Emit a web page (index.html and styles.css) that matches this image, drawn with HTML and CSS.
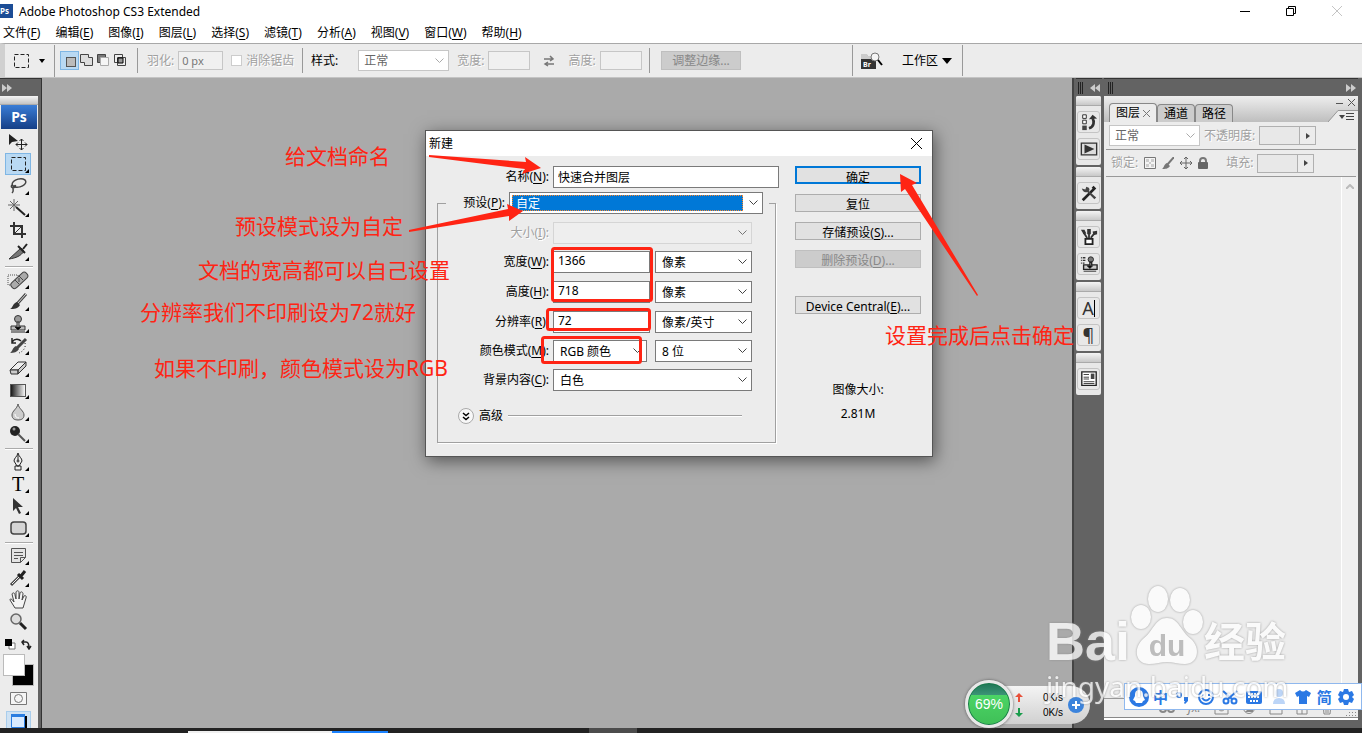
FILE: index.html
```html
<!DOCTYPE html>
<html lang="zh-CN">
<head>
  <meta charset="UTF-8" />
  <meta name="viewport" content="width=device-width, initial-scale=1.0"/>
  <title>Adobe Photoshop CS3 Extended</title>
  <link rel="stylesheet" href="styles.css">
</head>
<body>

  <header class="titlebar">
    <span class="app-icon">Ps</span>
    <h1>Adobe Photoshop CS3 Extended</h1>
    <div class="window-buttons">
      <button type="button" aria-label="最小化"><svg width="12" height="12"><path d="M1 6.500h10" stroke="#000"/></svg></button>
      <button type="button" aria-label="还原"><svg width="12" height="12" fill="none" stroke="#000"><path d="M1.500 3.500h7v7h-7zM3.500 3.500v-2h7v7h-2"/></svg></button>
      <button type="button" aria-label="关闭"><svg width="12" height="12" stroke="#c4c4c4"><path d="M1 1l10 10M11 1L1 11"/></svg></button>
    </div>
  </header>

  <nav class="menubar">
    <a href="#">文件(<u>F</u>)</a>
    <a href="#">编辑(<u>E</u>)</a>
    <a href="#">图像(<u>I</u>)</a>
    <a href="#">图层(<u>L</u>)</a>
    <a href="#">选择(<u>S</u>)</a>
    <a href="#">滤镜(<u>T</u>)</a>
    <a href="#">分析(<u>A</u>)</a>
    <a href="#">视图(<u>V</u>)</a>
    <a href="#">窗口(<u>W</u>)</a>
    <a href="#">帮助(<u>H</u>)</a>
  </nav>

  <div class="options">
    <div class="options-tool">
      <svg width="18" height="16"><rect x="1.500" y="1.500" width="14" height="13" fill="none" stroke="#222" stroke-dasharray="4 2"/></svg>
      <svg width="6" height="4"><path d="M0 0h6L3 4z"/></svg>
    </div>
    <div class="options-modes">
      <button type="button" class="mode on" aria-label="新选区"><svg width="16" height="16"><rect x="4.500" y="4.500" width="9" height="9" fill="#bbb" stroke="#555"/></svg></button>
      <button type="button" class="mode" aria-label="添加到选区"><svg width="16" height="16" fill="#ddd" stroke="#444"><path d="M1.500 1.500h8v3h4v8h-8v-3h-4z"/></svg></button>
      <button type="button" class="mode" aria-label="从选区减去"><svg width="16" height="16" stroke="#444"><path d="M1.500 1.500h8v3h-5v5h-3z" fill="#777"/><path d="M4.500 4.500h8v8h-8z" fill="#f5f5f5" stroke="#aaa"/></svg></button>
      <button type="button" class="mode" aria-label="与选区交叉"><svg width="16" height="16" stroke="#444"><path d="M1.500 1.500h8v8h-8zM4.500 4.500h8v8h-8z" fill="#eee"/><path d="M5 5h5v5H5z" fill="#999" stroke="#000"/></svg></button>
    </div>
    <div class="options-group">
      <label class="dim" for="feather">羽化:</label>
      <input class="opt-input feather" id="feather" type="text" value="0 px" disabled>
      <input class="opt-check" id="antialias" type="checkbox" disabled>
      <label class="dim" for="antialias">消除锯齿</label>
    </div>
    <div class="options-group style-group">
      <label class="style-label" for="style">样式:</label>
      <select class="opt-select" id="style" disabled><option>正常</option></select>
      <label class="dim" for="optW">宽度:</label>
      <input class="opt-input" id="optW" type="text" disabled>
      <svg class="swap" width="12" height="12" fill="none" stroke="#777" stroke-width="1.500"><path d="M1 4h9M7 1l3 3-3 2M11 9H2M5 7L2 9l3 2"/></svg>
      <label class="dim" for="optH">高度:</label>
      <input class="opt-input" id="optH" type="text" disabled>
    </div>
    <div class="options-refine">
      <button type="button" class="refine" disabled>调整边缘...</button>
    </div>
    <div class="options-work">
      <svg width="24" height="20"><path d="M1 4h6l1 2h8v12H1z" fill="#333"/><path d="M1 3h6l1 2h8v3H1z" fill="#ccc"/><text x="3" y="16" font-size="7" font-weight="bold" fill="#fff">Br</text><circle cx="15" cy="6" r="4" fill="#f5f5f5" stroke="#777"/><path d="M18 9l4 5" stroke="#000" stroke-width="2"/></svg>
      <button type="button" class="workspace-btn">工作区 <svg width="10" height="6"><path d="M0 0h10L5 6z"/></svg></button>
    </div>
  </div>

  <main class="workspace">

    <aside class="toolbox">
      <div class="dark-head"><svg width="10" height="8" fill="#ccc"><path d="M0 0l5 4-5 4zM5 0l5 4-5 4z"/></svg></div>
      <div class="tools">
        <div class="grip"></div>
        <div class="ps-logo">Ps</div>
        <div class="tool-group">
          <button type="button" aria-label="移动"><svg viewBox="0 0 24 20"><path d="M3 2v11l3-3 6-1z" fill="#222"/><path d="M15.500 7v11M10 12.500h11M13.500 9l2-2 2 2M13.500 16l2 2 2-2M12 10.500l-2 2 2 2M19 10.500l2 2-2 2" fill="none" stroke="#222"/></svg></button>
          <button type="button" class="on more" aria-label="矩形选框"><svg viewBox="0 0 24 20"><rect x="5.500" y="3.500" width="14" height="13" fill="none" stroke="#222" stroke-dasharray="4 2"/></svg></button>
          <button type="button" class="more" aria-label="套索"><svg viewBox="0 0 24 20" fill="none" stroke="#444" stroke-width="1.500"><ellipse cx="13" cy="7" rx="7" ry="4" transform="rotate(-15 13 7)"/><path d="M6 9c-2 2 1 4 3 2s-2-2-2 1 1 3-1 5"/></svg></button>
          <button type="button" class="more" aria-label="魔棒"><svg viewBox="0 0 24 20" fill="none"><path d="M8 1v12M2 7h12M4 3l8 8M12 3l-8 8" stroke="#666"/><path d="M10 9l9 8" stroke="#222" stroke-width="2"/></svg></button>
          <button type="button" aria-label="裁剪"><svg viewBox="0 0 24 20" fill="none" stroke="#333" stroke-width="2"><path d="M8 2v12h12M4 6h12v12"/><path d="M9 13l7-7" stroke-width="1"/></svg></button>
          <button type="button" class="more" aria-label="切片"><svg viewBox="0 0 24 20"><path d="M3 17L15 6l3 3c-3 5-8 7-15 8z" fill="#777" stroke="#333"/><path d="M12 4l7 7M17 7l4-5" stroke="#222" stroke-width="2"/></svg></button>
        </div>
        <div class="tool-group">
          <button type="button" class="more" aria-label="修复画笔"><svg viewBox="0 0 24 20"><rect x="2" y="5" width="10" height="10" fill="none" stroke="#555" stroke-dasharray="1 1"/><rect x="3" y="7" width="20" height="7" rx="3" fill="#aaa" stroke="#444" transform="rotate(-43 13 10)"/><path d="M9 10l4 4M13 6l4 4M12 9h2M12 11h2" stroke="#444"/></svg></button>
          <button type="button" class="more" aria-label="画笔"><svg viewBox="0 0 24 20"><path d="M20 2l-9 10" stroke="#444" stroke-width="3"/><path d="M20 2l-9 10" stroke="#ddd"/><path d="M11 10l3 3c-2 4-6 4-10 4 3-1 2-5 7-7z" fill="#333"/></svg></button>
          <button type="button" class="more" aria-label="仿制图章"><svg viewBox="0 0 24 20"><circle cx="12" cy="5" r="3.500" fill="#999" stroke="#333"/><path d="M11 8h2v4h6v4H5v-4h6z" fill="#bbb" stroke="#333"/><path d="M9 13h6l-3 3zM5 18h14" stroke="#222"/></svg></button>
          <button type="button" class="more" aria-label="历史画笔"><svg viewBox="0 0 24 20"><path d="M20 3L10 13" stroke="#444" stroke-width="3"/><path d="M10 10l3 3c-2 3-5 4-9 4 3-2 2-5 6-7z" fill="#444"/><path d="M6 6c3-4 7-3 9-1M6 2v5h4" fill="none" stroke="#222" stroke-width="1.500"/><path d="M19 7c1 4-1 8-6 10" fill="none" stroke="#222" stroke-dasharray="1 2"/></svg></button>
          <button type="button" class="more" aria-label="橡皮擦"><svg viewBox="0 0 24 20" stroke="#333"><path d="M4 12l8-8h8l-8 8z" fill="#eee"/><path d="M4 12h8v4H5zM12 12l8-8v4l-8 8z" fill="#ccc"/></svg></button>
          <button type="button" class="more" aria-label="渐变"><svg viewBox="0 0 24 20"><defs><linearGradient id="ramp"><stop stop-color="#111"/><stop offset="1" stop-color="#fff"/></linearGradient></defs><rect x="4.500" y="4.500" width="15" height="12" fill="url(#ramp)" stroke="#555"/></svg></button>
          <button type="button" class="more" aria-label="模糊"><svg viewBox="0 0 24 20"><path d="M12 2c1 5 6 7 6 11s-3 5-6 5-6-1-6-5 5-6 6-11z" fill="#ccc" stroke="#555"/><path d="M9 12c0 3 2 4 4 4" stroke="#fff" fill="none"/></svg></button>
          <button type="button" class="more" aria-label="减淡"><svg viewBox="0 0 24 20"><circle cx="9" cy="7" r="5" fill="#222"/><circle cx="8" cy="5" r="1.500" fill="#999"/><path d="M12 10l7 7" stroke="#555" stroke-width="2"/></svg></button>
        </div>
        <div class="tool-group">
          <button type="button" class="more" aria-label="钢笔"><svg viewBox="0 0 24 20" fill="#eee" stroke="#222"><path d="M12 1c1 4 4 5 4 8l-3 5h-2l-3-5c0-3 3-4 4-8zM12 3v6M9 14h6v4H9z"/><circle cx="12" cy="9" r="1"/></svg></button>
          <button type="button" class="more type-tool" aria-label="文字">T</button>
          <button type="button" class="more" aria-label="路径选择"><svg viewBox="0 0 24 20"><path d="M7 2v13l3-3 3 6 2-1-3-6h5z" fill="#333"/></svg></button>
          <button type="button" class="more" aria-label="圆角矩形"><svg viewBox="0 0 24 20"><rect x="5" y="4" width="15" height="12" rx="3" fill="#d5d5d5" stroke="#444" stroke-width="1.500"/></svg></button>
        </div>
        <div class="tool-group">
          <button type="button" class="more" aria-label="注释"><svg viewBox="0 0 24 20" fill="#e4e4e4" stroke="#555"><path d="M5.500 2.500h14v9l-5 5h-9zM14.500 16.500v-5h5M8 6.500h9M8 9.500h9M8 12.500h4"/></svg></button>
          <button type="button" class="more" aria-label="吸管"><svg viewBox="0 0 24 20"><path d="M5 17l9-9" stroke="#444" stroke-width="3"/><path d="M6 16l8-8" stroke="#eee"/><path d="M12 6l5 5M15 8l4-5" stroke="#222" stroke-width="3"/></svg></button>
          <button type="button" aria-label="抓手"><svg viewBox="0 0 24 20"><path d="M9 18l-5-8c0-2 2-1 4 2L6 4c1-2 3-1 3 1l1 4V2c1-2 3-1 3 0v7l1-6c1-2 3-1 3 1l-1 6 2-4c1-1 3 0 2 2l-3 10z" fill="#f4f4f4" stroke="#444"/></svg></button>
          <button type="button" aria-label="缩放"><svg viewBox="0 0 24 20"><circle cx="10" cy="7" r="5" fill="#ddd" stroke="#666" stroke-width="1.500"/><path d="M14 11l6 6" stroke="#222" stroke-width="3"/></svg></button>
        </div>
        <div class="swatch-mini">
          <svg width="11" height="11"><path d="M4 4h6v6H4z" fill="#fff" stroke="#777"/><path d="M0 0h7v7H0z"/></svg>
          <svg width="11" height="11" fill="none" stroke="#222" stroke-width="1.500"><path d="M3 1L1 3l2 3M1 3h4q3 0 3 6M6 7l2 3 2-3"/></svg>
        </div>
        <div class="swatches"><i class="back"></i><i class="front"></i></div>
        <button type="button" class="mask-btn" aria-label="快速蒙版"><svg width="17" height="13" fill="#f5f5f5" stroke="#777"><path d="M.500.500h16v12H.500z"/><circle cx="8.500" cy="6.500" r="4"/></svg></button>
        <button type="button" class="screen-btn" aria-label="屏幕模式"><svg width="16" height="14"><path d="M2 2h14v12H2z" fill="#000"/><path d="M.500.500h13v13H.500z" fill="#d9ebff" stroke="#2a7de0"/><path d="M0 0h14v3H0z" fill="#2a7de0"/></svg></button>
      </div>
    </aside>

    <section class="canvas">
      <form class="dialog">
        <div class="dialog-title">
          <h2>新建</h2>
          <button type="button" aria-label="关闭"><svg width="11" height="11" stroke="#000"><path d="M0 0l11 11M11 0L0 11"/></svg></button>
        </div>
        <div class="dialog-body">
          <div class="dialog-left">
            <div class="name-row">
              <label for="docName">名称(<u>N</u>):</label>
              <input class="field" id="docName" type="text" value="快速合并图层">
            </div>
            <fieldset>
              <legend>
                <label for="preset">预设(<u>P</u>):</label>
                <span class="preset-box"><select class="field preset" id="preset"><option>自定</option></select></span>
              </legend>
              <div class="row first">
                <label class="dim" for="size">大小(<u>I</u>):</label>
                <select class="field wide" id="size" disabled><option></option></select>
              </div>
              <div class="row">
                <label for="width">宽度(<u>W</u>):</label>
                <input class="field" id="width" type="text" value="1366">
                <select class="field" aria-label="宽度单位"><option>像素</option></select>
              </div>
              <div class="row measure">
                <label for="height">高度(<u>H</u>):</label>
                <input class="field" id="height" type="text" value="718">
                <select class="field" aria-label="高度单位"><option>像素</option></select>
              </div>
              <div class="row measure">
                <label for="res">分辨率(<u>R</u>):</label>
                <input class="field" id="res" type="text" value="72">
                <select class="field" aria-label="分辨率单位"><option>像素/英寸</option></select>
              </div>
              <div class="row">
                <label for="mode">颜色模式(<u>M</u>):</label>
                <select class="field mode-select" id="mode"><option>RGB 颜色</option></select>
                <select class="field" aria-label="位深度"><option>8 位</option></select>
              </div>
              <div class="row">
                <label for="bg">背景内容(<u>C</u>):</label>
                <select class="field wide" id="bg"><option>白色</option></select>
              </div>
              <div class="advanced">
                <button type="button" aria-label="展开高级选项"><svg width="8" height="9" fill="none" stroke="#000" stroke-width="1.500"><path d="M1 1l3 2.500L7 1M1 5l3 2.500L7 5"/></svg></button>
                <span>高级</span>
                <hr>
              </div>
            </fieldset>
          </div>
          <div class="dialog-right">
            <button type="button" class="btn primary">确定</button>
            <button type="button" class="btn">复位</button>
            <button type="button" class="btn">存储预设(<u>S</u>)...</button>
            <button type="button" class="btn" disabled>删除预设(<u>D</u>)...</button>
            <button type="button" class="btn device">Device Central(<u>E</u>)...</button>
            <p class="image-size">图像大小:<br>2.81M</p>
          </div>
        </div>
      </form>

      <!-- tutorial notes over the dialog -->
      <svg class="marks" viewBox="42 78 1030 650" width="1030" height="650">
        <g fill="#ff2414">
          <path d="M429 155L526 162 525 157 541 168 522 174 525 169 429 157z"/>
          <path d="M409 230L508 209 507 204 523 211 509 221 509 216 409 232z"/>
          <path d="M978 295L912 185 917 183 900 174 901 192 905 189 977 296z"/>
        </g>
        <g fill="none" stroke="#ff2414" stroke-width="3">
          <rect x="552.500" y="248.500" width="99" height="52" rx="2"/>
          <rect x="547.500" y="309.500" width="102" height="20" rx="2"/>
          <rect x="542.500" y="337.500" width="98" height="25" rx="2"/>
        </g>
      </svg>
      <p class="note note-name">给文档命名</p>
      <p class="note note-preset">预设模式设为自定</p>
      <p class="note note-size">文档的宽高都可以自己设置</p>
      <p class="note note-res">分辨率我们不印刷设为72就好</p>
      <p class="note note-mode">如果不印刷，颜色模式设为RGB</p>
      <p class="note note-ok">设置完成后点击确定</p>
    </section>

    <aside class="dock">
      <div class="dark-head">
        <svg width="6" height="12" stroke="#222"><path d="M.500 0v12M2.500 0v12M4.500 0v12"/></svg>
        <svg width="10" height="8" fill="#ccc"><path d="M5 0L0 4l5 4zM10 0L5 4l5 4z"/></svg>
      </div>
      <div class="dock-group">
        <button type="button" aria-label="历史记录"><svg viewBox="0 0 20 20"><path d="M3 2h4v4H3zM3 8h4v4H3z" fill="#fff" stroke="#222"/><path d="M2.500 14h5v5h-5z" fill="#444"/><path d="M10 17c6-2 6-8 4-11" fill="none" stroke="#333" stroke-width="3"/><path d="M10 7l4-5 5 4z" fill="#333"/></svg></button>
        <button type="button" aria-label="动作"><svg viewBox="0 0 20 20"><path d="M1.500 3.500h17v13h-17z" fill="#ddd" stroke="#333" stroke-width="1.500"/><path d="M5 5v10l11-5z" fill="#333"/></svg></button>
      </div>
      <div class="dock-group">
        <button type="button" aria-label="工具预设"><svg viewBox="0 0 20 20"><path d="M3 18L17 4M14 3l3 3" stroke="#222" stroke-width="3"/><path d="M2 5l4 1 1-3c4 1 4 3 3 5l8 7-2 2-8-8c-3 1-5-1-6-4z" fill="#444"/></svg></button>
      </div>
      <div class="dock-group">
        <button type="button" aria-label="画笔面板"><svg viewBox="0 0 20 20"><path d="M6 12h8v6H6z" fill="#fff" stroke="#222" stroke-width="2"/><path d="M10 11V5M8 11L4 5M12 11l4-5" stroke="#333" stroke-width="2"/><path d="M8 1h4v6H8zM1 2h4l2 4-3 1zM14 4l5-1v4l-4 1z" fill="#333"/></svg></button>
        <button type="button" aria-label="仿制源"><svg viewBox="0 0 20 20"><path d="M1 3h5M1 6h5M1 9h4" stroke="#333" stroke-width="1.500" stroke-dasharray="1 1 4"/><circle cx="12" cy="5" r="3" fill="#777" stroke="#222"/><path d="M11 8h2v3h6v5H4v-5h7z" fill="#ccc" stroke="#222" stroke-width="1.500"/><path d="M8 12h6l-3 3zM4 18h14" stroke="#222"/></svg></button>
      </div>
      <div class="dock-group">
        <button type="button" class="char-btn" aria-label="字符">A</button>
        <button type="button" class="para-btn" aria-label="段落">¶</button>
      </div>
      <div class="dock-group">
        <button type="button" aria-label="图层复合"><svg viewBox="0 0 20 20"><path d="M2 2h16v15H2z" fill="#fff" stroke="#222" stroke-width="1.500"/><path d="M4 5h6M4 8h6M4 10h6M4 13h12M4 15h12" stroke="#333"/><path d="M12 4h4v6h-4z" fill="#444"/></svg></button>
      </div>
    </aside>

    <aside class="panel-dock">
      <div class="dark-head">
        <svg width="6" height="12" stroke="#222"><path d="M.500 0v12M2.500 0v12M4.500 0v12"/></svg>
        <svg width="10" height="8" fill="#ccc"><path d="M0 0l5 4-5 4zM5 0l5 4-5 4z"/></svg>
      </div>
      <div class="panel">
        <div class="tabs">
          <button type="button" class="tab active">图层 <svg width="7" height="7" stroke="#777"><path d="M0 0l7 7M7 0L0 7"/></svg></button>
          <button type="button" class="tab">通道</button>
          <button type="button" class="tab">路径</button>
          <div class="panel-corner">
            <svg width="22" height="9" stroke="#555"><path d="M0 5.500h7M12 1l7 7M19 1l-7 7"/></svg>
            <svg width="30" height="12"><path d="M0 12L10 1h20v11z" fill="#ececec"/><path d="M0 12L10 .500h20" fill="none" stroke="#999"/><path d="M11 5h6l-3 4z" fill="#444"/><path d="M18 3.500h8M18 6.500h8M18 9.500h8" stroke="#444"/></svg>
          </div>
        </div>
        <div class="panel-row">
          <select class="blend" aria-label="混合模式" disabled><option>正常</option></select>
          <label class="dim" for="opacity">不透明度:</label>
          <span class="slider-box"><input id="opacity" type="text" disabled><button type="button" aria-label="调整不透明度" disabled><svg width="4" height="6"><path d="M0 0l4 3-4 3z" fill="#444"/></svg></button></span>
        </div>
        <div class="panel-row lock-row">
          <span class="dim">锁定:</span>
          <div class="locks">
            <svg width="12" height="12"><path d="M.500.500h11v11H.500z" fill="#f4f4f4" stroke="#777"/><path d="M2 2h3v3H2zM7 2h3v3H7zM5 5h2v2H5zM2 7h3v3H2zM7 7h3v3H7z" fill="#ccc"/></svg>
            <svg width="12" height="12"><path d="M12 0L5 8" stroke="#777" stroke-width="2"/><path d="M5 6l3 3c-2 3-5 3-8 3 2-1 2-5 5-6z" fill="#777"/></svg>
            <svg width="12" height="12" fill="none" stroke="#666"><path d="M6 0v12M0 6h12M4 2l2-2 2 2M4 10l2 2 2-2M2 4L0 6l2 2M10 4l2 2-2 2"/></svg>
            <svg width="10" height="12"><path d="M2 6V4q0-3 3-3t3 3v2" fill="none" stroke="#777" stroke-width="2"/><rect y="5" width="10" height="7" rx="1" fill="#666"/></svg>
          </div>
          <label class="dim" for="fill">填充:</label>
          <span class="slider-box"><input id="fill" type="text" disabled><button type="button" aria-label="调整填充" disabled><svg width="4" height="6"><path d="M0 0l4 3-4 3z" fill="#444"/></svg></button></span>
        </div>
        <div class="layer-list">
          <div class="scroll"><svg width="8" height="5" fill="none" stroke="#bbb" stroke-width="2"><path d="M0 5l4-4 4 4"/></svg></div>
        </div>
        <div class="panel-foot">
          <svg width="16" height="14" fill="none" stroke="#888" stroke-width="2"><circle cx="4" cy="8" r="3"/><circle cx="12" cy="8" r="3"/></svg>
          <em>fx.</em>
          <svg width="15" height="14"><path d="M1 2h13v11H1z" fill="#eee" stroke="#888"/><circle cx="7.500" cy="7.500" r="3" fill="#aaa"/></svg>
          <svg width="14" height="14"><circle cx="7" cy="7" r="5.500" fill="#eee" stroke="#888"/><path d="M3 11L11 3v8z" fill="#888"/></svg>
          <svg width="14" height="14"><path d="M1 2h5l2 2h5v9H1z" fill="#eee" stroke="#888"/></svg>
          <svg width="12" height="14"><path d="M1 2h10v11H1zM1 8h5v5" fill="#eee" stroke="#888"/></svg>
          <svg width="12" height="14" fill="none" stroke="#888"><path d="M1 3h10M2 3l1 10h6l1-10M5 5v7M7 5v7"/></svg>
          <svg class="resize" width="10" height="10" stroke="#888" stroke-dasharray="1 2"><path d="M0 9.500h10M3 6.500h7M6 3.500h4M9 .500h1"/></svg>
        </div>
      </div>
    </aside>
  </main>

  <footer class="taskbar"><span class="task-light"></span><span class="task-blue"></span><span class="task-grey"></span></footer>

  <div class="speed">
    <div class="speed-pill">
      <div class="speed-rates">
        <svg width="8" height="9" fill="#e8503a"><path d="M4 0l4 4H5v5H3V4H0z"/></svg><span>0K/s</span>
        <svg width="8" height="9" fill="#1a9c4c"><path d="M4 9L0 5h3V0h2v5h3z"/></svg><span>0K/s</span>
      </div>
      <button type="button" aria-label="加速"><svg width="16" height="16"><circle cx="8" cy="8" r="8" fill="#3b83dc"/><path d="M8 4v8M4 8h8" stroke="#fff" stroke-width="2"/></svg></button>
    </div>
    <div class="speed-ball">69%</div>
  </div>

  <div class="ime">
    <svg viewBox="0 0 20 20"><circle cx="10" cy="10" r="10"/><path d="M10 3c4 0 4 4 4 6l2 4-2 1-1 2H7l-1-2-2-1 2-4c0-2 0-6 4-6z" fill="#fff"/></svg>
    <span>中</span>
    <svg viewBox="0 0 20 20"><circle cx="7" cy="8" r="2" fill="none" stroke="#2a78e4" stroke-width="2"/><path d="M12 10h4v4l-3 3-1-1 1-2h-1z"/></svg>
    <svg viewBox="0 0 20 20" fill="none" stroke="#2a78e4" stroke-width="2"><circle cx="10" cy="10" r="7"/><path d="M6 11q4 5 8 0M7 7v2M13 7v2"/></svg>
    <svg viewBox="0 0 20 20" fill="none" stroke="#2a78e4" stroke-width="2"><circle cx="6" cy="14" r="2.500"/><circle cx="14" cy="14" r="2.500"/><path d="M3 4l9 8M17 4l-9 8"/></svg>
    <svg viewBox="0 0 20 20"><rect x="2" y="4" width="16" height="13" rx="2"/><path d="M4 7h12M4 10h12M6 14h8" stroke="#fff" stroke-width="2" stroke-dasharray="2 1"/></svg>
    <svg class="faint" viewBox="0 0 20 20"><circle cx="10" cy="6" r="4"/><path d="M4 17q0-6 6-6t6 6z"/></svg>
    <svg viewBox="0 0 20 20"><path d="M7 3q3 3 6 0l5 3-2 4-2-1v8H6V9l-2 1-2-4z"/></svg>
    <span>简</span>
    <svg viewBox="0 0 20 20"><path d="M8 2h4l1 3 3-1 2 4-2 2 2 2-2 4-3-1-1 3H8l-1-3-3 1-2-4 2-2-2-2 2-4 3 1z"/><circle cx="10" cy="10" r="3" fill="#fff"/></svg>
  </div>

  <div class="watermark">
    <div class="wm-logo">
      <span class="wm-bai">Bai</span>
      <span class="wm-paw">
        <svg viewBox="0 0 74 80" fill="#fff"><ellipse cx="11" cy="31" rx="10" ry="12"/><ellipse cx="28" cy="13" rx="10" ry="13"/><ellipse cx="50" cy="14" rx="10" ry="12"/><ellipse cx="63" cy="36" rx="10" ry="12"/><path d="M37 32c12 0 14 14 24 21 10 9 7 25-6 25-7 0-12-2-18-2s-11 2-18 2C5 78 3 62 13 53c10-7 12-21 24-21z"/></svg>
        <b>du</b>
      </span>
      <span class="wm-cn">经验</span>
    </div>
    <div class="wm-url">jingyan.baidu.com</div>
  </div>

</body>
</html>
```
FILE: styles.css
```css
* {
  margin: 0;
  padding: 0;
  box-sizing: border-box;
}

body {
  display: flex;
  flex-direction: column;
  height: 100vh;
  overflow: hidden;
  position: relative;
  font-family: "Noto Sans", "Noto Sans CJK SC", sans-serif;
  font-size: 12px;
  line-height: 16px;
  color: #000;
  background: #fff;
}

button,
input,
select {
  font: inherit;
  color: inherit;
  border: none;
  background: none;
  appearance: none;
}

svg {
  display: block;
  flex: none;
}

u {
  text-underline-offset: 2px;
}

.dim {
  color: #a0a0a0;
  text-shadow: 1px 1px 0 #fff;
}

/* title and menus */
.titlebar {
  display: flex;
  align-items: center;
  height: 22px;
}

.titlebar h1 {
  margin-left: 6px;
  padding-top: 2px;
  font-size: 12px;
  font-weight: normal;
}

.app-icon {
  width: 13px;
  height: 14px;
  background: #1c4d96;
  color: #fff;
  font-size: 8px;
  font-weight: bold;
  line-height: 13px;
}

.window-buttons {
  display: flex;
  margin-left: auto;
  padding-right: 2px;
}

.window-buttons button {
  width: 46px;
  height: 22px;
  display: grid;
  place-items: center;
}

.menubar {
  display: flex;
  gap: 15px;
  height: 21px;
  padding: 3px 3px 2px;
}

.menubar a {
  color: #000;
  text-decoration: none;
}

/* options bar */
.options {
  display: flex;
  align-items: center;
  height: 35px;
  background: #ececec;
  border-top: 1px solid #a8a8a8;
  border-bottom: 1px solid #c4c4c4;
  border-left: 5px solid #d0d0d0;
}

.options-tool {
  display: flex;
  align-items: center;
  gap: 8px;
  height: 32px;
  width: 50px;
  padding-left: 8px;
  border-right: 1px solid #999;
}

.options-modes {
  display: flex;
  align-items: center;
  height: 25px;
  width: 83px;
  padding-left: 6px;
  border-right: 1px solid #999;
}

.mode {
  display: grid;
  place-items: center;
  width: 17px;
  height: 17px;
}

.mode.on {
  background: #b9d9f3;
  outline: 1px solid #7fb6e4;
}

.options-group {
  display: flex;
  align-items: center;
  gap: 4px;
  height: 25px;
  width: 165px;
  padding-left: 9px;
  border-right: 1px solid #999;
}

.options-group label {
  white-space: nowrap;
}

.opt-input {
  width: 42px;
  height: 19px;
  padding-left: 3px;
  border: 1px solid #c6c6c6;
  background: #f0f0f0;
  color: #777;
}

.feather {
  width: 45px;
  font-size: 11px;
}

.opt-check {
  width: 11px;
  height: 11px;
  margin-left: 4px;
  border: 1px solid #ccc;
  background: #fff;
}

.style-group {
  width: 347px;
  padding-left: 8px;
}

.style-label {
  margin-right: 16px;
}

.opt-select,
.blend {
  width: 91px;
  height: 21px;
  padding: 0 5px;
  border: 1px solid #c6c6c6;
  background: #fff url("data:image/svg+xml,%3Csvg xmlns='http://www.w3.org/2000/svg' width='9' height='6' fill='none' stroke='%23aaa'%3E%3Cpath d='M.5.5l4 4 4-4'/%3E%3C/svg%3E") no-repeat right 4px center;
  color: #666;
  opacity: 1;
}

.opt-select {
  margin-right: 4px;
}

.swap {
  margin: 0 9px;
}

.options-refine {
  padding-left: 11px;
}

.refine {
  width: 80px;
  height: 19px;
  border: 1px solid #bfbfbf;
  background: #ccc;
  color: #888;
}

.options-work {
  display: flex;
  align-items: center;
  gap: 18px;
  height: 31px;
  width: 111px;
  margin-left: 111px;
  padding-left: 7px;
  border-left: 1px solid #999;
  border-right: 1px solid #999;
}

.workspace-btn {
  display: flex;
  align-items: center;
  gap: 4px;
  white-space: nowrap;
}

/* workspace */
.workspace {
  display: flex;
  flex: 1;
  min-height: 0;
  background: #636363;
}

.dark-head {
  display: flex;
  flex: none;
  align-items: center;
  height: 18px;
  padding: 0 2px;
  border-top: 1px solid #333;
}

.toolbox {
  width: 42px;
  flex: none;
  overflow: hidden;
  border-right: 1px solid #333;
}

.tools {
  display: flex;
  flex-direction: column;
  width: 38px;
  height: 100%;
  background: #ececec;
}

.grip {
  flex: none;
  height: 9px;
  background: linear-gradient(#f4f4f4, #c4c4c4);
  border-bottom: 1px solid #aaa;
}

.ps-logo {
  flex: none;
  height: 24px;
  margin: 0 1px 2px;
  background: linear-gradient(#3a7dd6, #163f86);
  color: #fff;
  font-size: 14px;
  font-weight: bold;
  line-height: 24px;
  text-align: center;
}

.tool-group {
  display: flex;
  flex-direction: column;
  flex: none;
  width: 28px;
  margin: 0 5px;
  padding-bottom: 3px;
}

.tool-group + .tool-group {
  padding-top: 2px;
  border-top: 1px solid #aaa;
  box-shadow: inset 0 1px 0 #fff;
}

.tool-group button {
  position: relative;
  height: 22px;
  width: 26px;
}

.tool-group button svg {
  width: 24px;
  height: 20px;
  margin-left: 1px;
}

.tool-group .on {
  background: #b9d9f3;
  outline: 1px solid #7fb6e4;
  outline-offset: -1px;
}

.more::after {
  content: "";
  position: absolute;
  right: 2px;
  bottom: 2px;
  border: 2px solid #000;
  border-top-color: transparent;
  border-left-color: transparent;
}

.tool-group .type-tool {
  font-family: "Liberation Serif", serif;
  font-size: 20px;
  line-height: 22px;
}

.swatch-mini {
  display: flex;
  justify-content: space-between;
  flex: none;
  width: 27px;
  height: 18px;
  margin-left: 5px;
  padding-top: 3px;
}

.swatches {
  position: relative;
  flex: none;
  width: 31px;
  height: 32px;
  margin-left: 3px;
}

.swatches i {
  position: absolute;
  width: 22px;
  height: 22px;
  border: 1px solid #bbb;
}

.swatches .front {
  left: 0;
  top: 0;
  background: #fff;
}

.swatches .back {
  right: 0;
  bottom: 0;
  background: #000;
}

.mask-btn,
.screen-btn {
  display: grid;
  place-items: center;
  flex: none;
  width: 25px;
  height: 19px;
  margin: 3px 6px 0;
}

.screen-btn {
  background: #cfe2f3;
  border: 1px solid #a9cdec;
}

.canvas {
  position: relative;
  flex: 1;
  min-width: 0;
  background: #aaa;
}

/* new document dialog */
.dialog {
  position: absolute;
  left: 383px;
  top: 52px;
  width: 508px;
  background: #ececec;
  border: 1px solid #555;
  box-shadow: 2px 4px 16px rgba(0, 0, 0, 0.5);
}

.dialog-title {
  display: flex;
  align-items: center;
  justify-content: space-between;
  height: 25px;
  padding: 0 10px 0 3px;
  background: #fff;
}

.dialog-title h2 {
  font-size: 12px;
  font-weight: normal;
}

.dialog-body {
  display: flex;
  gap: 16px;
  padding: 10px 11px 13px;
}

.dialog-left {
  width: 342px;
}

.field {
  width: 97px;
  height: 22px;
  padding: 0 4px;
  border: 1px solid #7a7a7a;
  background-color: #fff;
}

.row input.field {
  padding-bottom: 3px;
}

select.field {
  padding: 2px 6px 0;
  background-image: url("data:image/svg+xml,%3Csvg xmlns='http://www.w3.org/2000/svg' width='9' height='6' fill='none' stroke='%23444'%3E%3Cpath d='M.5.5l4 4 4-4'/%3E%3C/svg%3E");
  background-repeat: no-repeat;
  background-position: right 4px center;
}

select.field:disabled {
  border-color: #ccc;
  background-color: #f0f0f0;
  opacity: 0.7;
}

.name-row {
  display: flex;
  align-items: center;
  gap: 4px;
  margin-bottom: 4px;
}

.name-row label {
  width: 112px;
  text-align: right;
}

.name-row .field {
  flex: 1;
}

fieldset {
  width: 339px;
  border: 1px solid #a0a0a0;
  box-shadow: 1px 1px 0 #fff;
}

legend {
  display: flex;
  align-items: center;
  justify-content: flex-end;
  gap: 4px;
  width: 323px;
  margin-left: 8px;
  padding-right: 6px;
}

.preset-box {
  position: relative;
  display: flex;
}

/* focus ring round the chosen value */
.preset-box::after {
  content: "";
  position: absolute;
  inset: 3px 20px 3px 3px;
  border: 1px dotted #ff8728;
  pointer-events: none;
}

select.preset {
  width: 254px;
  color: #fff;
  background-image: url("data:image/svg+xml,%3Csvg xmlns='http://www.w3.org/2000/svg' width='9' height='6' fill='none' stroke='%23444'%3E%3Cpath d='M.5.5l4 4 4-4'/%3E%3C/svg%3E"), linear-gradient(#0078d7, #0078d7);
  background-position: right 4px center, 2px 2px;
  background-size: auto, calc(100% - 21px) calc(100% - 4px);
}

.row {
  display: flex;
  align-items: center;
  margin-top: 7px;
}

.row.first,
.row.measure {
  margin-top: 8px;
}

.row label {
  width: 111px;
  margin-right: 4px;
  text-align: right;
}

.row .field + .field {
  margin-left: 5px;
}

.row .wide {
  width: 199px;
}

.row .mode-select {
  width: 94px;
}

.row .mode-select + .field {
  margin-left: 8px;
}

.advanced {
  display: flex;
  align-items: center;
  gap: 5px;
  margin: 17px 33px 18px 20px;
}

.advanced button {
  display: grid;
  place-items: center;
  width: 16px;
  height: 16px;
  border: 1px solid #aaa;
  border-radius: 50%;
  background: #f8f8f8;
}

.advanced hr {
  flex: 1;
  border: none;
  border-top: 1px solid #a0a0a0;
  border-bottom: 1px solid #fff;
}

.dialog-right {
  display: flex;
  flex-direction: column;
  flex: 1;
  gap: 10px;
}

.btn {
  height: 18px;
  padding-top: 3px;
  border: 1px solid #adadad;
  background: #e1e1e1;
  line-height: 14px;
}

.btn.primary {
  border: 2px solid #0078d7;
}

.btn:disabled {
  border-color: #bfbfbf;
  background: #ccc;
  color: #888;
}

.btn.device {
  margin-top: 18px;
}

.image-size {
  margin-top: 54px;
  line-height: 24px;
  text-align: center;
}

/* tutorial notes */
.marks {
  position: absolute;
  left: 0;
  top: 0;
}

.note {
  position: absolute;
  color: #ff2414;
  font-size: 21px;
  line-height: 28px;
  white-space: nowrap;
}

.note-name {
  left: 243px;
  top: 64px;
}

.note-preset {
  left: 193px;
  top: 134px;
}

.note-size {
  left: 156px;
  top: 178px;
}

.note-res {
  left: 98px;
  top: 220px;
}

.note-mode {
  left: 112px;
  top: 276px;
}

.note-ok {
  left: 843px;
  top: 243px;
}

/* icon dock */
.dock {
  flex: none;
  width: 32px;
  padding: 0 2px;
  border-left: 2px solid #444;
}

.dock .dark-head {
  gap: 6px;
}

.dock-group {
  display: flex;
  flex-direction: column;
  align-items: center;
  gap: 5px;
  margin-bottom: 2px;
  margin-right: 1px;
  padding-bottom: 5px;
  background: #e8e8e8;
  border-radius: 2px;
}

.dock-group::before {
  content: "";
  width: 100%;
  height: 9px;
  border-bottom: 1px solid #aaa;
  border-radius: 2px 2px 0 0;
  background: linear-gradient(#f4f4f4, #c8c8c8);
}

.dock-group button {
  display: flex;
  align-items: center;
  justify-content: center;
  width: 23px;
  height: 22px;
  border: 1px solid #c4c4c4;
  border-radius: 3px;
}

.dock-group button svg {
  width: 18px;
  height: 18px;
}

.dock-group .char-btn,
.dock-group .para-btn {
  color: #333;
  font-size: 18px;
  line-height: 18px;
}

.char-btn::after {
  content: "";
  width: 1px;
  height: 17px;
  background: #000;
}

/* layers panel */
.panel-dock {
  display: flex;
  flex-direction: column;
  flex: none;
  width: 258px;
  padding: 0 4px 8px 0;
}

.panel-dock .dark-head {
  justify-content: space-between;
  padding-left: 4px;
}

.panel {
  display: flex;
  flex-direction: column;
  flex: 1;
  background: #ececec;
  border-bottom: 2px solid #fff;
}

.tabs {
  display: flex;
  align-items: flex-end;
  height: 26px;
  padding-left: 5px;
  background: linear-gradient(#eee, #bebebe);
}

.tab {
  display: flex;
  align-items: center;
  gap: 3px;
  height: 18px;
  padding: 0 6px;
  border: 1px solid #888;
  border-bottom: none;
  border-radius: 4px 4px 0 0;
  background: #ccc;
  white-space: nowrap;
}

.tab.active {
  height: 19px;
  background: #ececec;
}

.panel-corner {
  display: flex;
  flex-direction: column;
  align-items: flex-end;
  gap: 3px;
  margin-left: auto;
}

.panel-row {
  display: flex;
  align-items: center;
  gap: 4px;
  height: 28px;
  margin: 0 2px;
  padding-left: 3px;
  border-bottom: 1px solid #999;
}

.panel-row + .panel-row {
  height: 27px;
}

.slider-box {
  display: flex;
  width: 57px;
  height: 19px;
  border: 1px solid #b0b0b0;
}

.slider-box input {
  width: 39px;
  background: #e8e8e8;
}

.slider-box button {
  display: grid;
  place-items: center;
  flex: 1;
  border-left: 1px solid #b0b0b0;
}

.lock-row {
  padding-left: 5px;
}

.locks {
  display: flex;
  gap: 6px;
  margin: 0 14px 0 2px;
}

.layer-list {
  display: flex;
  justify-content: flex-end;
  flex: 1;
}

.scroll {
  width: 17px;
  padding: 7px 4px;
  border-left: 1px solid #fff;
  background: #f0f0f0;
}

.panel-foot {
  display: flex;
  align-items: center;
  gap: 13px;
  height: 20px;
  padding: 0 2px 0 55px;
  border-top: 1px solid #999;
  border-bottom: 1px solid #888;
  color: #888;
}

.resize {
  margin-left: auto;
  margin-top: 6px;
}

/* bottom of the screen */
.taskbar {
  display: flex;
  flex: none;
  height: 5px;
  padding-left: 188px;
  background: #222;
}

.task-light,
.task-blue {
  height: 2px;
  align-self: flex-end;
  width: 144px;
  background: #f0f0f0;
}

.taskbar .task-blue {
  width: 56px;
  background: #1a82ff;
}

.task-grey {
  width: 48px;
  margin-left: 201px;
  background: #4c4c4c;
}

.speed {
  position: absolute;
  right: 272px;
  bottom: 5px;
  width: 125px;
  height: 48px;
}

.speed-pill {
  display: flex;
  align-items: center;
  justify-content: space-between;
  height: 38px;
  margin: 6px 0 0 30px;
  padding: 0 6px 0 20px;
  border-radius: 0 19px 19px 0;
  background: linear-gradient(#f4f4f4, #d0d0d0);
}

.speed-rates {
  display: grid;
  grid-template-columns: 8px auto;
  align-items: center;
  column-gap: 20px;
  font-family: "Liberation Sans", sans-serif;
  font-size: 10px;
  line-height: 15px;
}

.speed-ball {
  position: absolute;
  left: 0;
  top: 0;
  width: 48px;
  height: 48px;
  border: 3px solid #e8e8e8;
  border-radius: 50%;
  background: linear-gradient(#1d7555 0, #3c9376 28%, #4bd465 29%, #3fbf57);
  box-shadow: inset 0 0 0 1px #19794a, 0 0 3px #555;
  color: #fff;
  font-family: "Liberation Sans", sans-serif;
  font-size: 14px;
  line-height: 42px;
  text-align: center;
}

.ime {
  position: absolute;
  right: 0;
  bottom: 23px;
  display: flex;
  align-items: center;
  justify-content: space-between;
  width: 238px;
  height: 27px;
  padding: 0 5px 0 4px;
  border: 1px solid #8fb8ee;
  background: #fff;
}

.ime svg {
  width: 20px;
  height: 20px;
  fill: #2a78e4;
}

.ime svg[fill="none"] {
  fill: none;
}

.ime .faint {
  fill: #bcd5f7;
}

.ime span {
  color: #2a78e4;
  font-size: 15px;
  font-weight: bold;
}

.watermark {
  position: absolute;
  right: 73px;
  bottom: 30px;
  width: 243px;
  color: #fff;
  opacity: 0.78;
  pointer-events: none;
  filter: drop-shadow(0 0 1px #888);
}

.wm-logo {
  display: flex;
  align-items: flex-end;
  height: 84px;
  padding-bottom: 3px;
}

.wm-bai {
  font-family: "Liberation Sans", sans-serif;
  font-size: 54px;
  font-weight: bold;
  line-height: 50px;
}

.wm-paw {
  position: relative;
  width: 74px;
  height: 80px;
}

.wm-paw svg {
  width: 74px;
  height: 80px;
}

.wm-paw b {
  position: absolute;
  left: 0;
  right: 0;
  bottom: 4px;
  color: #b0b0b0;
  font-family: "Liberation Sans", sans-serif;
  font-size: 30px;
  line-height: 32px;
  text-align: center;
}

.wm-cn {
  font-size: 41px;
  font-weight: bold;
  line-height: 50px;
  white-space: nowrap;
}

.wm-url {
  font-size: 28px;
  line-height: 34px;
}
```
